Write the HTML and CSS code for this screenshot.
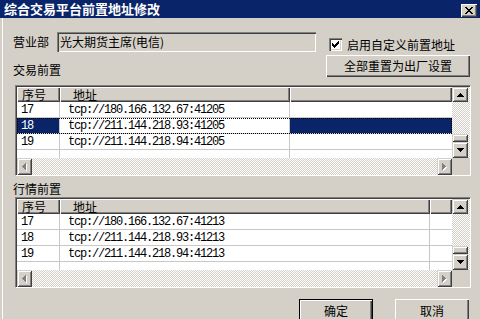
FILE: index.html
```html
<!DOCTYPE html>
<html lang="zh-CN">
<head>
<meta charset="utf-8">
<title>综合交易平台前置地址修改</title>
<link rel="stylesheet" href="styles.css">
</head>
<body>
<div class="window">
  <div class="titlebar">
    <span class="title">综合交易平台前置地址修改</span>
    <span class="close"><svg width="8" height="7" viewBox="0 0 8 7" shape-rendering="crispEdges"><path d="M0 0h2v1H0zM6 0h2v1H6zM1 1h2v1H1zM5 1h2v1H5zM2 2h4v1H2zM3 3h2v1H3zM2 4h4v1H2zM1 5h2v1H1zM5 5h2v1H5zM0 6h2v1H0zM6 6h2v1H6z" fill="#000"/></svg></span>
  </div>
  <div class="content">
    <div class="top">
      <div class="top-left">
        <div class="field-row">
          <span class="lbl">营业部</span>
          <div class="field">光大期货主席(电信)</div>
        </div>
        <div class="section-label first">交易前置</div>
      </div>
      <div class="top-right">
        <label class="check">
          <span class="box"><svg width="7" height="7" viewBox="0 0 7 7" shape-rendering="crispEdges"><path d="M6 0h1v1H6zM5 1h2v1H5zM0 2h1v1H0zM4 2h3v1H4zM0 3h2v1H0zM3 3h3v1H3zM0 4h5v1H0zM1 5h3v1H1zM2 6h1v1H2z" fill="#000"/></svg></span>
          <span>启用自定义前置地址</span>
        </label>
        <div class="btn wide">全部重置为出厂设置</div>
      </div>
    </div>

    <div class="frame">
      <div class="frame-inner">
        <div class="list">
          <div class="hdr">
            <div class="hc c1">序号</div>
            <div class="hc c2">地址</div>
            <div class="hc c3a"></div>
          </div>
          <div class="row">
            <div class="cell c1">17</div>
            <div class="cell c2">tcp://180.166.132.67:41205</div>
            <div class="cell c3a last"></div>
          </div>
          <div class="row sel">
            <div class="cell c1 hl">18</div>
            <div class="cell c2">tcp://211.144.218.93:41205</div>
            <div class="cell c3a last hl"></div>
          </div>
          <div class="row">
            <div class="cell c1">19</div>
            <div class="cell c2">tcp://211.144.218.94:41205</div>
            <div class="cell c3a last"></div>
          </div>
          <div class="row">
            <div class="cell c1"></div>
            <div class="cell c2"></div>
            <div class="cell c3a last"></div>
          </div>
        </div>
        <div class="vs">
          <div class="sb up"><svg width="7" height="4" viewBox="0 0 7 4" shape-rendering="crispEdges"><path d="M3 0h1v1h1v1h1v1h1v1H0V3h1V2h1V1h1z"/></svg></div>
          <div class="sb thumb"></div>
          <div class="sb down"><svg width="7" height="4" viewBox="0 0 7 4" shape-rendering="crispEdges"><path d="M0 0h7v1h-1v1h-1v1h-1v1h-1v-1h-1v-1h-1v-1h-1z"/></svg></div>
        </div>
        <div class="hs">
          <div class="sb hbtn"><svg width="5" height="8" viewBox="0 0 5 8" shape-rendering="crispEdges"><path transform="translate(1 1)" d="M4 0h-1v1h-1v1h-1v1h-1v1h1v1h1v1h1v1h1z" fill="#fff"/><path d="M4 0h-1v1h-1v1h-1v1h-1v1h1v1h1v1h1v1h1z" fill="#808080"/></svg></div>
          <div class="sb hbtn"><svg width="5" height="8" viewBox="0 0 5 8" shape-rendering="crispEdges"><path transform="translate(1 1)" d="M0 0h1v1h1v1h1v1h1v1h-1v1h-1v1h-1v1h-1z" fill="#fff"/><path d="M0 0h1v1h1v1h1v1h1v1h-1v1h-1v1h-1v1h-1z" fill="#808080"/></svg></div>
        </div>
        <div class="corner"></div>
      </div>
    </div>

    <div class="section-label second">行情前置</div>

    <div class="frame">
      <div class="frame-inner">
        <div class="list">
          <div class="hdr">
            <div class="hc c1">序号</div>
            <div class="hc c2b">地址</div>
            <div class="hc c3b"></div>
          </div>
          <div class="row">
            <div class="cell c1">17</div>
            <div class="cell c2b">tcp://180.166.132.67:41213</div>
            <div class="cell c3b last"></div>
          </div>
          <div class="row">
            <div class="cell c1">18</div>
            <div class="cell c2b">tcp://211.144.218.93:41213</div>
            <div class="cell c3b last"></div>
          </div>
          <div class="row">
            <div class="cell c1">19</div>
            <div class="cell c2b">tcp://211.144.218.94:41213</div>
            <div class="cell c3b last"></div>
          </div>
          <div class="row">
            <div class="cell c1"></div>
            <div class="cell c2b"></div>
            <div class="cell c3b last"></div>
          </div>
        </div>
        <div class="vs">
          <div class="sb up"><svg width="7" height="4" viewBox="0 0 7 4" shape-rendering="crispEdges"><path d="M3 0h1v1h1v1h1v1h1v1H0V3h1V2h1V1h1z"/></svg></div>
          <div class="sb thumb"></div>
          <div class="sb down"><svg width="7" height="4" viewBox="0 0 7 4" shape-rendering="crispEdges"><path d="M0 0h7v1h-1v1h-1v1h-1v1h-1v-1h-1v-1h-1v-1h-1z"/></svg></div>
        </div>
        <div class="hs">
          <div class="sb hbtn"><svg width="5" height="8" viewBox="0 0 5 8" shape-rendering="crispEdges"><path transform="translate(1 1)" d="M4 0h-1v1h-1v1h-1v1h-1v1h1v1h1v1h1v1h1z" fill="#fff"/><path d="M4 0h-1v1h-1v1h-1v1h-1v1h1v1h1v1h1v1h1z" fill="#808080"/></svg></div>
          <div class="sb hbtn"><svg width="5" height="8" viewBox="0 0 5 8" shape-rendering="crispEdges"><path transform="translate(1 1)" d="M0 0h1v1h1v1h1v1h1v1h-1v1h-1v1h-1v1h-1z" fill="#fff"/><path d="M0 0h1v1h1v1h1v1h1v1h-1v1h-1v1h-1v1h-1z" fill="#808080"/></svg></div>
        </div>
        <div class="corner"></div>
      </div>
    </div>

    <div class="buttons">
      <div class="btn default">确定</div>
      <div class="btn">取消</div>
    </div>
  </div>
</div>
</body>
</html>
```
FILE: styles.css
```css
* { box-sizing: border-box; }
html, body { margin: 0; padding: 0; }
body {
  width: 480px;
  height: 319px;
  overflow: hidden;
  background: #d4d0c8;
  font-family: "Noto Sans CJK SC", "Liberation Sans", sans-serif;
  font-size: 12px;
  color: #000;
}
.window {
  width: 480px;
  height: 319px;
  display: flex;
  flex-direction: column;
}
.titlebar {
  height: 18px;
  flex: none;
  background: #0a246a;
  display: flex;
  justify-content: space-between;
  align-items: flex-start;
  padding: 0 3px 0 4px;
}
.title {
  color: #fff;
  font-size: 13px;
  font-weight: bold;
  line-height: 18px;
}
.close {
  width: 16px;
  height: 13px;
  margin-top: 4px;
  background: #d4d0c8;
  box-shadow: inset 1px 1px #fff, inset -1px -1px #404040, inset -2px -2px #808080;
  display: flex;
  align-items: center;
  justify-content: center;
  padding-bottom: 1px;
}
.close svg, .sb svg, .box svg { display: block; }

.content {
  flex: 1;
  display: flex;
  flex-direction: column;
  padding-left: 15px;
  box-shadow: inset 2px 0 #d4d0c8, inset 3px 0 #fff;
}
.top {
  height: 67px;
  flex: none;
  display: flex;
  justify-content: space-between;
  padding-right: 10px;
}
.top-left { padding-top: 14px; }
.field-row {
  display: flex;
  align-items: center;
  height: 20px;
  margin-left: -2px;
}
.lbl { line-height: 14px; width: 44px; }
.field {
  width: 259px;
  height: 20px;
  padding-left: 3px;
  line-height: 20px;
  box-shadow: inset 1px 1px #808080, inset 2px 2px #404040, inset -1px -1px #fff, inset -2px -2px #d4d0c8;
}
.section-label {
  line-height: 14px;
  height: 14px;
  margin-left: -2px;
}
.section-label.first { margin-top: 11px; }
.section-label.second { margin-top: 6px; margin-bottom: 1px; flex: none; }

.top-right {
  width: 144px;
  padding-top: 20px;
}
.check {
  display: flex;
  align-items: center;
  height: 13px;
  line-height: 13px;
  margin-left: 3px;
  gap: 5px;
}
.box {
  width: 13px;
  height: 13px;
  background: #fff;
  box-shadow: inset 1px 1px #808080, inset 2px 2px #404040, inset -1px -1px #fff, inset -2px -2px #d4d0c8;
  display: flex;
  align-items: center;
  justify-content: center;
}
.btn {
  background: #d4d0c8;
  box-shadow: inset 1px 1px #fff, inset -1px -1px #404040, inset -2px -2px #808080;
  display: flex;
  align-items: center;
  justify-content: center;
  line-height: 14px;
}
.btn.wide {
  width: 144px;
  height: 22px;
  margin-top: 4px;
}

.frame {
  width: 456px;
  height: 91px;
  flex: none;
  border-style: solid;
  border-width: 1px;
  border-color: #808080 #fff #fff #808080;
}
.frame-inner {
  height: 100%;
  border-top: 1px solid #404040;
  border-left: 1px solid #404040;
  display: grid;
  grid-template-columns: 435px 18px;
  grid-template-rows: 71px 17px;
}
.list {
  overflow: hidden;
  background: #fff;
}
.hdr { display: flex; height: 15px; }
.hc {
  flex: none;
  height: 15px;
  line-height: 15px;
  background: #d4d0c8;
  box-shadow: inset 1px 1px #fff, inset -1px -1px #404040, inset -2px -2px #808080;
}
.hc.c1 { padding-left: 5px; }
.hc.c2, .hc.c2b { padding-left: 13px; }
.c1 { width: 43px; flex: none; }
.c2 { width: 230px; flex: none; }
.c3a { width: 162px; flex: none; }
.c2b { width: 370px; flex: none; }
.c3b { width: 22px; flex: none; }

.row {
  display: flex;
  height: 16px;
  position: relative;
}
.cell {
  height: 16px;
  border-right: 1px solid #c8c8c8;
  border-bottom: 1px solid #c8c8c8;
  font-family: "Liberation Mono", "DejaVu Sans Mono", monospace;
  font-size: 12px;
  letter-spacing: -1.2px;
  line-height: 17px;
  white-space: nowrap;
  overflow: hidden;
}
.cell.c1 { padding-left: 4px; }
.cell.c2, .cell.c2b { padding-left: 8px; }
.cell.last { border-right: none; }
.cell.hl { background: #0a246a; color: #fff; }
.row.sel::after {
  content: "";
  position: absolute;
  inset: 0;
  border: 1px dotted #000;
  pointer-events: none;
}

.vs, .hs {
  background-color: #d4d0c8;
  background-image: repeating-conic-gradient(#fff 0 25%, #d4d0c8 0 50%);
  background-size: 2px 2px;
}
.vs {
  display: flex;
  flex-direction: column;
}
.sb {
  flex: none;
  width: 16px;
  background: #d4d0c8;
  box-shadow: inset 1px 1px #d4d0c8, inset -1px -1px #404040, inset 2px 2px #fff, inset -2px -2px #808080;
  display: flex;
  align-items: center;
  justify-content: center;
}
.sb.up { height: 15px; }
.sb.thumb { height: 8px; margin-top: auto; }
.sb.down { height: 16px; }
.hs {
  display: flex;
  justify-content: space-between;
}
.sb.hbtn { width: 15px; height: 17px; }
.corner { background: #d4d0c8; }

.buttons {
  display: flex;
  justify-content: flex-end;
  gap: 22px;
  margin-top: 11px;
  padding-right: 11px;
}
.buttons .btn {
  width: 74px;
  height: 23px;
}
.btn.default {
  border: 1px solid #000;
}
```
